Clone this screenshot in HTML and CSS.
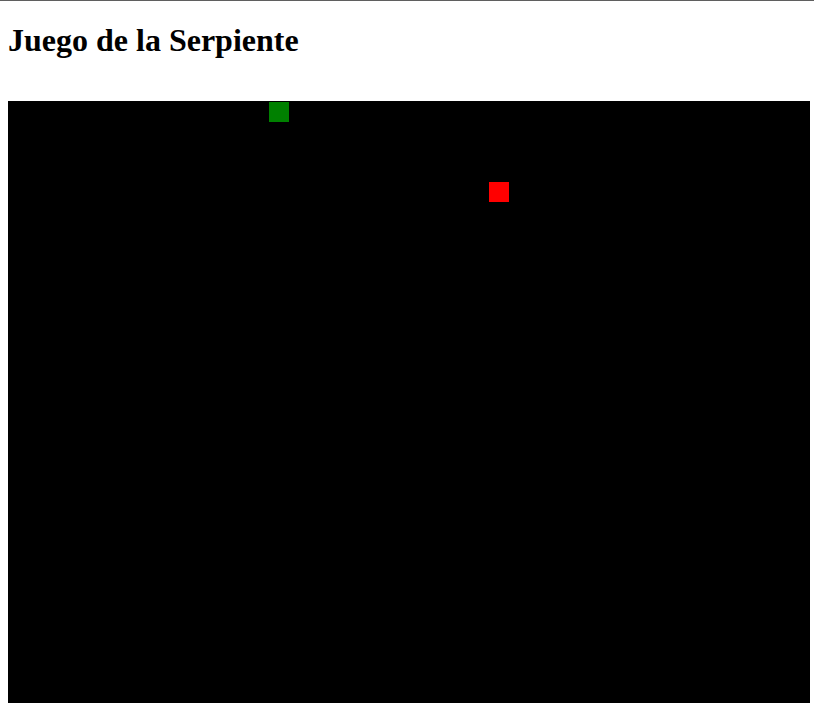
FILE: index.html
```html
<!DOCTYPE html>
<html lang="es">
<head>
<meta charset="utf-8">
<title>Juego de la Serpiente</title>
<link rel="stylesheet" href="styles.css">
</head>
<body class="page">
<h1 class="title">Juego de la Serpiente</h1>
<div class="board">
  <div class="cell snake" style="left:260px;top:0px"></div>
  <div class="cell food" style="left:480px;top:80px"></div>
</div>
</body>
</html>
```
FILE: styles.css
```css
html {
  border-top: 1px solid #5f5f5f;
}
.page {
  margin: 0 0 8px 8px;
  padding: 0;
  font-family: "Liberation Serif", "Times New Roman", serif;
  background: #fff;
  color: #000;
}
.title {
  font-size: 32px;
  line-height: 37px;
  font-weight: bold;
  margin: 21.44px 0 0;
  padding: 0;
}
.board {
  position: relative;
  width: 800px;
  height: 600px;
  background: #000;
  border: 1px solid #000;
  margin-top: 41.56px;
}
.cell {
  position: absolute;
  width: 20px;
  height: 20px;
}
.snake {
  background: #008000;
}
.food {
  background: #ff0000;
}
```
